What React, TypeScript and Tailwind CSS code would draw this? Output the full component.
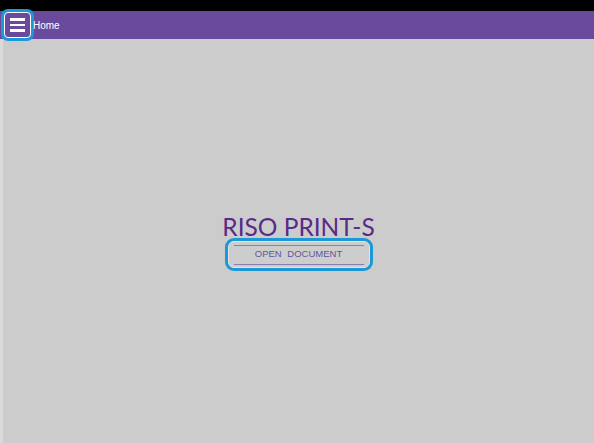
export default function App() {
  return (
    <div className="flex h-[443px] w-full flex-col bg-[#cccccc] font-['Lato',sans-serif]">
      <div className="h-[11px] bg-black" />
      <header className="flex h-[28px] items-center bg-[#694a9c]">
        <button className="ml-[4px] flex h-[26px] w-[27px] items-center justify-center rounded-[4px] border border-white bg-[#694a9c] ring-[3px] ring-[#1b98d8]">
          <span className="flex flex-col gap-[3px]">
            <span className="block h-[2.5px] w-[15px] bg-white" />
            <span className="block h-[2.5px] w-[15px] bg-white" />
            <span className="block h-[2.5px] w-[15px] bg-white" />
          </span>
        </button>
        <span className="ml-[2px] text-[10px] text-white font-['Liberation_Sans',sans-serif]">Home</span>
      </header>
      <main className="flex flex-1 flex-col items-center justify-center border-l-[3px] border-[#dadada]">
        <h1 className="text-[24.5px] leading-[26px] text-[#5a2a88]">RISO PRINT-S</h1>
        <button className="mt-[1px] flex h-[27px] w-[142px] items-center justify-center rounded-[6px] border border-[#e4e4e4] bg-[#cdcdcd] px-[5px] ring-[3px] ring-[#1b98d8]">
          <span className="flex h-[20px] w-full items-center justify-center border-y-[1.5px] border-[#8a7eb0] text-[9.5px] text-[#62549c] [word-spacing:3px] font-['Liberation_Sans',sans-serif]">
            OPEN DOCUMENT
          </span>
        </button>
      </main>
    </div>
  );
}
